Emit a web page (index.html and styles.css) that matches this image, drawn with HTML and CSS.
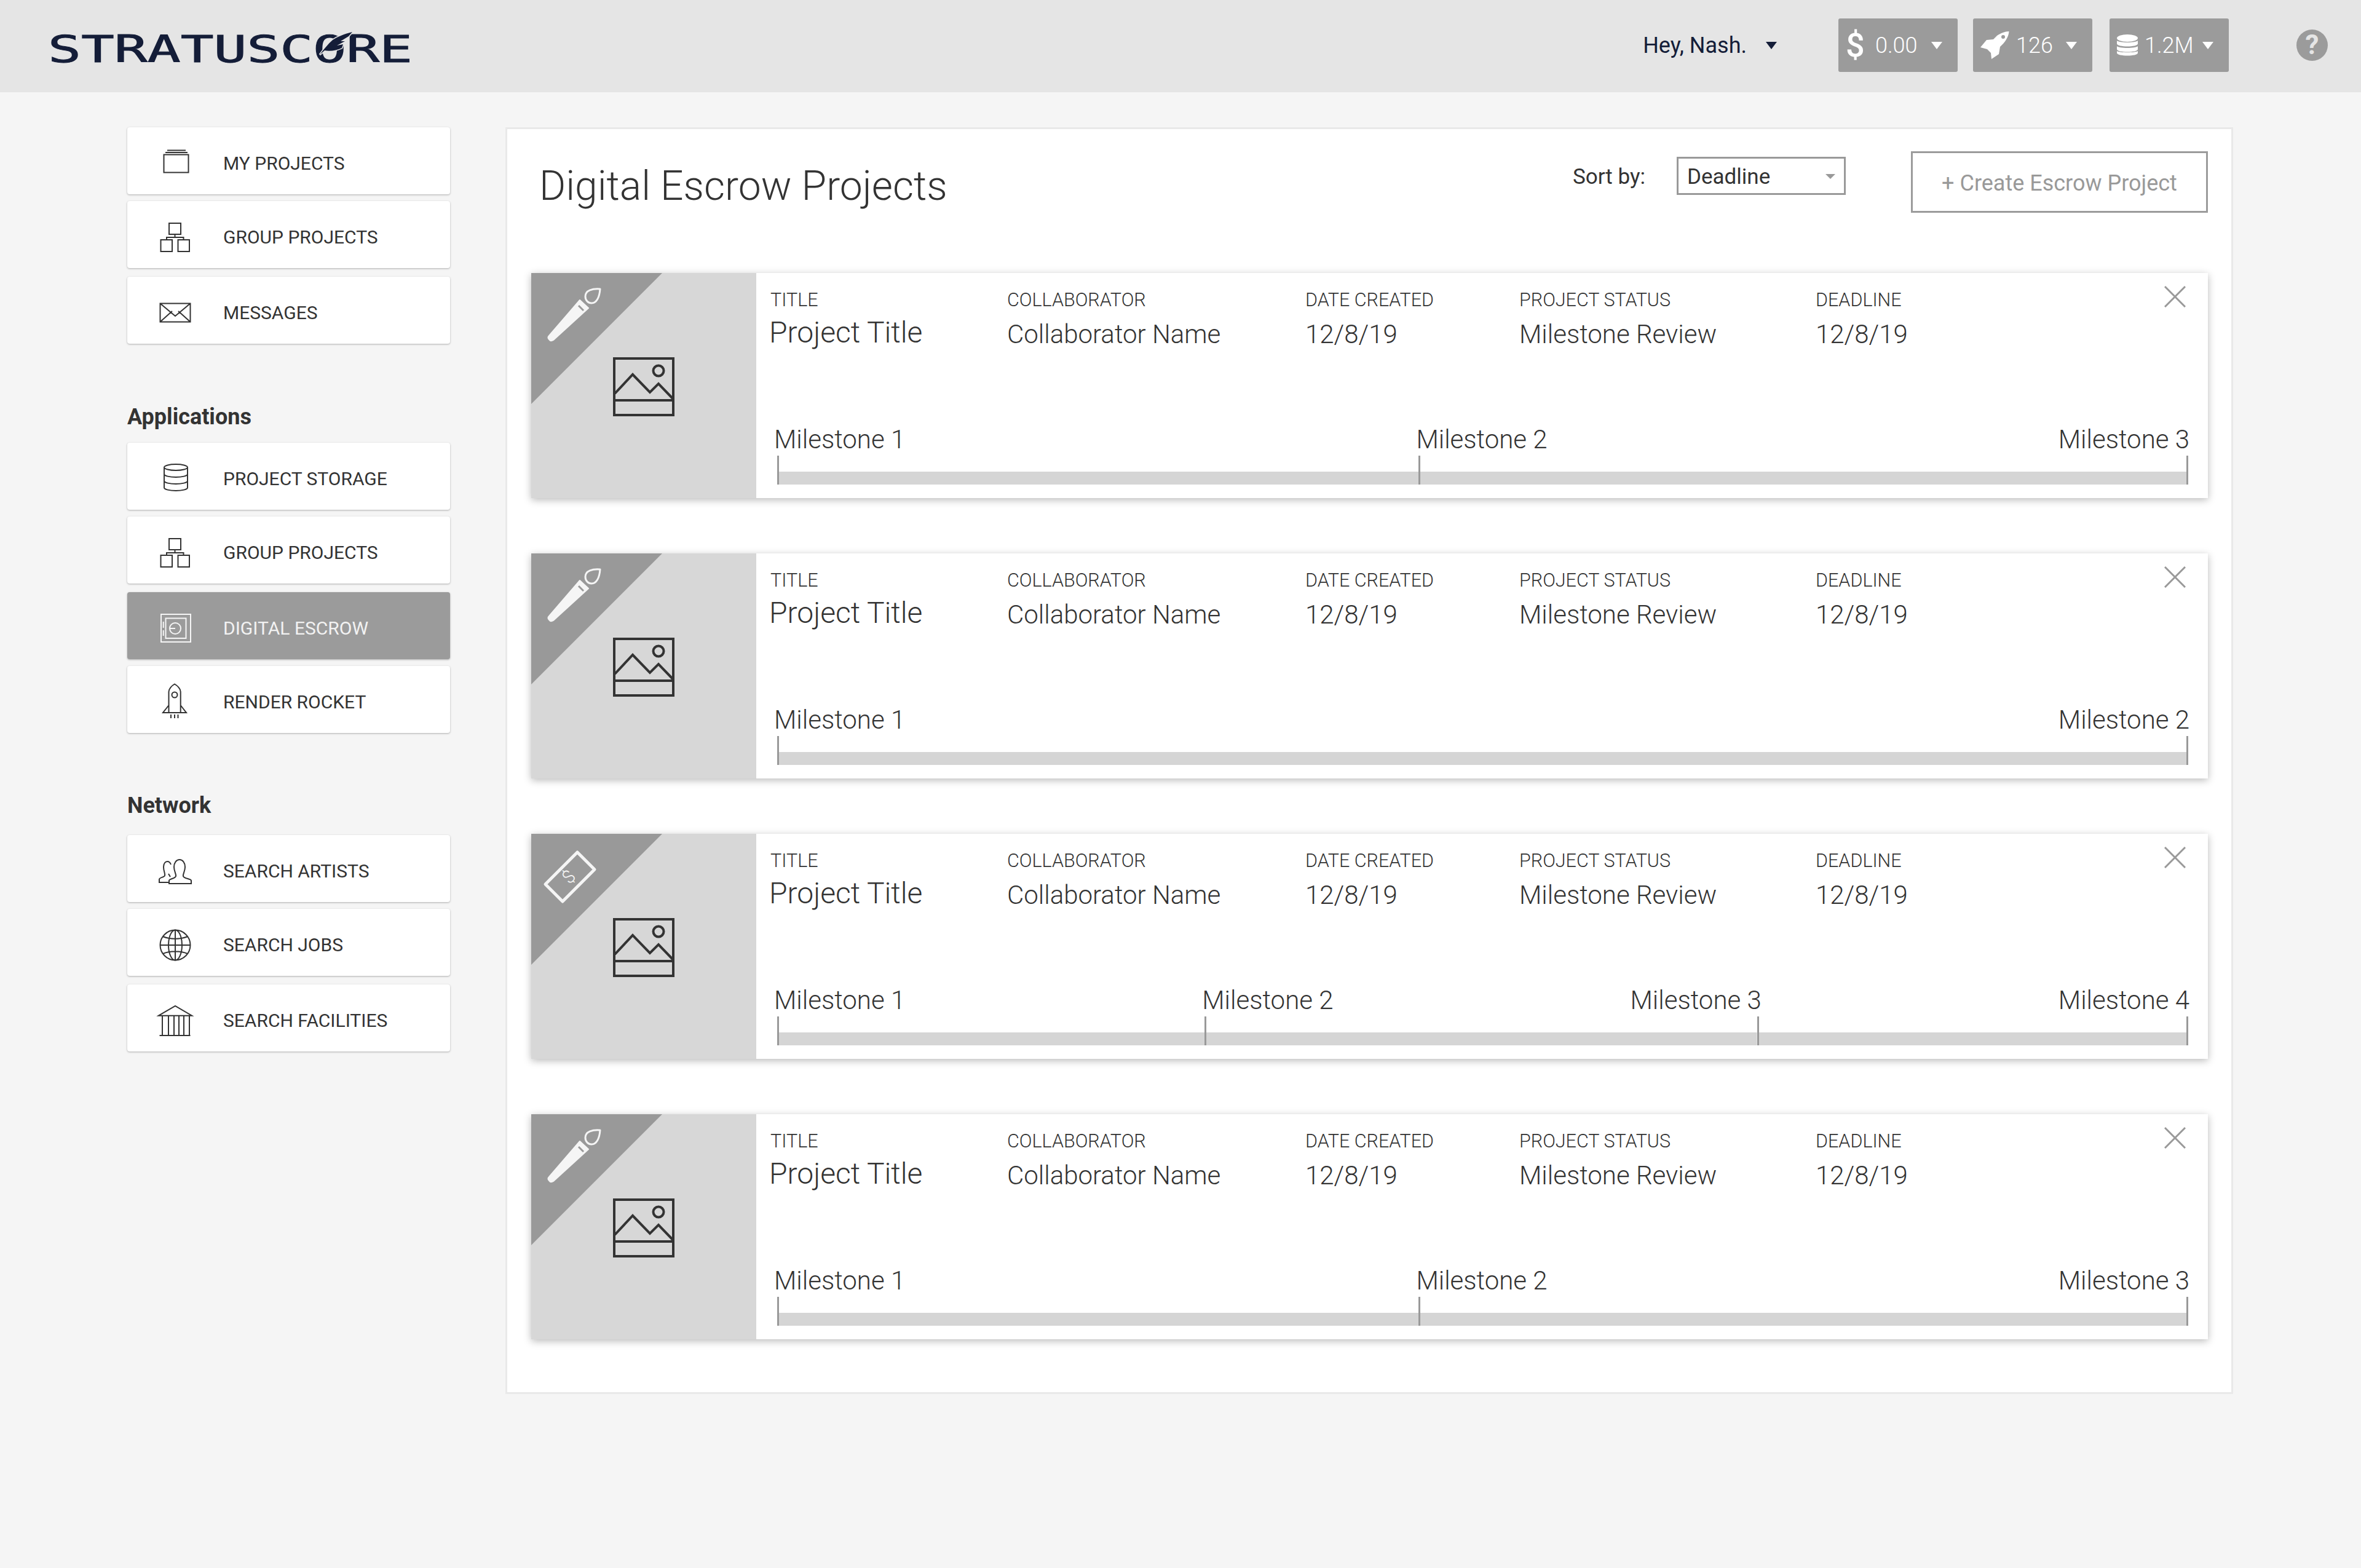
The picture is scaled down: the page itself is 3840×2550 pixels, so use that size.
FILE: index.html
```html
<!DOCTYPE html>
<html lang="en">
<head>
    <meta charset="UTF-8">
    <meta name="viewport" content="width=device-width, initial-scale=1.0">
    <title>Digital Escrow Projects</title>
    <link rel="stylesheet" href="styles.css">
</head>
<body>

<svg class="sprites" xmlns="http://www.w3.org/2000/svg">
    <symbol id="i-projects" viewBox="0 0 70 60"><path d="M16.5 19.5h40v29h-40zM19 16h36M22 12.5h30"/></symbol>
    <symbol id="i-group" viewBox="0 0 70 60"><path d="M25 11h19v18H25zM11.5 38H30v19H11.5zM39.5 38H58v19H39.5zM34.5 29v5M21 38v-4h27.5v4"/></symbol>
    <symbol id="i-mail" viewBox="0 0 70 60"><path d="M10.5 18.5h49v30h-49zM10.5 18.5L35 39l24.5-20.500M11 48l19-17M59 48L40 31"/></symbol>
    <symbol id="i-storage" viewBox="0 0 70 60"><ellipse cx="36" cy="15" rx="19" ry="5"/><path d="M17 15v33c0 3 9 5 19 5s19-2 19-5V15M17 26c0 3 9 5 19 5s19-2 19-5M17 37c0 3 9 5 19 5s19-2 19-5"/></symbol>
    <symbol id="i-safe" viewBox="0 0 70 60"><path d="M12 11h48v45H12zM19.500 17.500h33v32.500h-33zM15.700 23v10M15.700 37v9M26 34h9"/><circle cx="35" cy="34" r="9"/></symbol>
    <symbol id="i-rocket" viewBox="0 0 70 60"><path d="M24.500 51V17c0-5 5-10 9.500-12.500C38.500 7 43.700 12 43.700 17v34M24.500 39L15 51h38L43.700 39M28 54v6M34 54v8M39.500 54v6"/><circle cx="34" cy="22" r="4.500"/></symbol>
    <symbol id="i-artists" viewBox="0 0 70 60"><path d="M25 54v-5c0-3 10-3 11-7 1-3-3-8-3-15 0-7 4-12 9-12s9 5 9 12c0 7-4 12-3 15 1 4 13 4 13 7v5zM25 52H9v-5c0-3 8-3 9-6 1-3-2-7-2-14 0-6 3-9 6-9s5 2 6 5M24 38l3 5"/></symbol>
    <symbol id="i-globe" viewBox="0 0 70 60"><circle cx="35" cy="34" r="24.500"/><ellipse cx="35" cy="34" rx="11" ry="24.500"/><path d="M35 9.500v49M10.500 34h49M15 20c11 5 29 5 40 0M15 48c11-5 29-5 40 0"/></symbol>
    <symbol id="i-bank" viewBox="0 0 70 60"><path d="M8 25.700L35 10l27 15.700zM14 26v31M24 26v31M33 26v31M41 26v31M49 26v31M58 26v31M9.500 58h50"/></symbol>
    <symbol id="i-picture" viewBox="0 0 100 96"><path class="pic" d="M2 2h96v92H2zM2 70h96M3 59l29-31 28 29 14-14 24 25"/><circle class="pic" cx="74" cy="22" r="8.500"/></symbol>
    <symbol id="i-brush" viewBox="0 0 213 213"><path class="brush-body" d="M79 44l14 13-57 52c-3 2-5 2-7-1-2-2-2-4 0-6z"/><path class="brush-mark" d="M77 53l8 8"/><path class="brush-head" d="M112 26c-12-1-24 2-24 12 0 7 5 11 10 11 8 0 13-9 14-23z"/></symbol>
    <symbol id="i-bill" viewBox="0 0 213 213"><path class="bill" d="M75 30l28 28-52 52-28-28z"/><text class="bill-sign" x="0" y="0" transform="translate(61 70) rotate(-45)" text-anchor="middle" dy="10">$</text></symbol>
    <symbol id="i-close" viewBox="0 0 35 35"><path class="close-x" d="M1 1l33 33M34 1L1 34"/></symbol>
</svg>

<header class="topbar">
    <svg class="logo" viewBox="0 0 593 52" width="593" height="52" xmlns="http://www.w3.org/2000/svg">
        <text x="0" y="50" textLength="593" lengthAdjust="spacingAndGlyphs">STRATUSCORE</text>
        <path class="feather" d="M495 1c-12 3-25 8-32 13-8 7-15 16-21 24l8-7c8 2 20 0 28-4l2-6-10 2 13-7h-7l13-8z"/>
    </svg>
    <div class="topbar-right">
        <div class="greeting">Hey, Nash.<span class="caret caret-dark"></span></div>
        <div class="stat stat-money"><span class="stat-dollar">$</span><span>0.00</span><span class="caret"></span></div>
        <div class="stat stat-rocket">
            <svg class="stat-icon" viewBox="0 0 47 46" width="47" height="46" xmlns="http://www.w3.org/2000/svg"><path d="M46.500 0C40 0 33 3 27 7l-6 6-11 1L0 26l11 3 6 6 1 10 12-8 2-12C40 18 46 9 46.500 0z"/><circle class="stat-hole" cx="37" cy="9" r="3"/></svg>
            <span>126</span><span class="caret"></span>
        </div>
        <div class="stat">
            <svg class="stat-icon" viewBox="0 0 34 35" width="34" height="35" xmlns="http://www.w3.org/2000/svg"><ellipse cx="17" cy="6" rx="17" ry="6"/><path d="M0 10c3 4 31 4 34 0v5c0 6-34 6-34 0zM0 19c3 4 31 4 34 0v5c0 6-34 6-34 0zM0 27c3 3 31 3 34 0v3c0 6-34 6-34 0z"/></svg>
            <span>1.2M</span><span class="caret"></span>
        </div>
        <div class="help">?</div>
    </div>
</header>

<div class="page">
    <aside class="sidebar">
        <div class="nav-group">
            <a class="nav-item"><svg class="nav-icon"><use href="#i-projects"/></svg><span>MY PROJECTS</span></a>
            <a class="nav-item"><svg class="nav-icon"><use href="#i-group"/></svg><span>GROUP PROJECTS</span></a>
            <a class="nav-item wide"><svg class="nav-icon"><use href="#i-mail"/></svg><span>MESSAGES</span></a>
        </div>

        <h3 class="nav-heading">Applications</h3>
        <div class="nav-group">
            <a class="nav-item"><svg class="nav-icon"><use href="#i-storage"/></svg><span>PROJECT STORAGE</span></a>
            <a class="nav-item"><svg class="nav-icon"><use href="#i-group"/></svg><span>GROUP PROJECTS</span></a>
            <a class="nav-item wide active"><svg class="nav-icon"><use href="#i-safe"/></svg><span>DIGITAL ESCROW</span></a>
            <a class="nav-item"><svg class="nav-icon"><use href="#i-rocket"/></svg><span>RENDER ROCKET</span></a>
        </div>

        <h3 class="nav-heading network">Network</h3>
        <div class="nav-group">
            <a class="nav-item"><svg class="nav-icon"><use href="#i-artists"/></svg><span>SEARCH ARTISTS</span></a>
            <a class="nav-item"><svg class="nav-icon"><use href="#i-globe"/></svg><span>SEARCH JOBS</span></a>
            <a class="nav-item wide"><svg class="nav-icon"><use href="#i-bank"/></svg><span>SEARCH FACILITIES</span></a>
        </div>
    </aside>

    <main class="panel">
        <div class="panel-head">
            <h1>Digital Escrow Projects</h1>
            <span class="sort-label">Sort by:</span>
            <div class="sort-select">Deadline<span class="caret caret-grey"></span></div>
            <button class="create-btn">+ Create Escrow Project</button>
        </div>

        <div class="project-list">

            <article class="project">
                <div class="thumb">
                    <div class="corner"><svg class="corner-icon"><use href="#i-brush"/></svg></div>
                    <svg class="pic-icon"><use href="#i-picture"/></svg>
                </div>
                <div class="project-body">
                    <div class="info">
                        <div class="col col-title"><label>TITLE</label><p class="project-title">Project Title</p></div>
                        <div class="col col-collab"><label>COLLABORATOR</label><p>Collaborator Name</p></div>
                        <div class="col col-date"><label>DATE CREATED</label><p>12/8/19</p></div>
                        <div class="col col-status"><label>PROJECT STATUS</label><p>Milestone Review</p></div>
                        <div class="col"><label>DEADLINE</label><p>12/8/19</p></div>
                        <svg class="close"><use href="#i-close"/></svg>
                    </div>
                    <div class="milestones">
                        <div class="ms-labels"><span>Milestone 1</span><span>Milestone 2</span><span>Milestone 3</span></div>
                        <div class="ms-track">
                            <div class="ms-seg" style="flex: 1044"></div>
                            <div class="ms-seg" style="flex: 1251"></div>
                        </div>
                    </div>
                </div>
            </article>

            <article class="project">
                <div class="thumb">
                    <div class="corner"><svg class="corner-icon"><use href="#i-brush"/></svg></div>
                    <svg class="pic-icon"><use href="#i-picture"/></svg>
                </div>
                <div class="project-body">
                    <div class="info">
                        <div class="col col-title"><label>TITLE</label><p class="project-title">Project Title</p></div>
                        <div class="col col-collab"><label>COLLABORATOR</label><p>Collaborator Name</p></div>
                        <div class="col col-date"><label>DATE CREATED</label><p>12/8/19</p></div>
                        <div class="col col-status"><label>PROJECT STATUS</label><p>Milestone Review</p></div>
                        <div class="col"><label>DEADLINE</label><p>12/8/19</p></div>
                        <svg class="close"><use href="#i-close"/></svg>
                    </div>
                    <div class="milestones">
                        <div class="ms-labels"><span>Milestone 1</span><span>Milestone 2</span></div>
                        <div class="ms-track">
                            <div class="ms-seg" style="flex: 1"></div>
                        </div>
                    </div>
                </div>
            </article>

            <article class="project">
                <div class="thumb">
                    <div class="corner"><svg class="corner-icon"><use href="#i-bill"/></svg></div>
                    <svg class="pic-icon"><use href="#i-picture"/></svg>
                </div>
                <div class="project-body">
                    <div class="info">
                        <div class="col col-title"><label>TITLE</label><p class="project-title">Project Title</p></div>
                        <div class="col col-collab"><label>COLLABORATOR</label><p>Collaborator Name</p></div>
                        <div class="col col-date"><label>DATE CREATED</label><p>12/8/19</p></div>
                        <div class="col col-status"><label>PROJECT STATUS</label><p>Milestone Review</p></div>
                        <div class="col"><label>DEADLINE</label><p>12/8/19</p></div>
                        <svg class="close"><use href="#i-close"/></svg>
                    </div>
                    <div class="milestones">
                        <div class="ms-labels"><span>Milestone 1</span><span>Milestone 2</span><span>Milestone 3</span><span>Milestone 4</span></div>
                        <div class="ms-track">
                            <div class="ms-seg" style="flex: 696"></div>
                            <div class="ms-seg" style="flex: 900"></div>
                            <div class="ms-seg" style="flex: 699"></div>
                        </div>
                    </div>
                </div>
            </article>

            <article class="project">
                <div class="thumb">
                    <div class="corner"><svg class="corner-icon"><use href="#i-brush"/></svg></div>
                    <svg class="pic-icon"><use href="#i-picture"/></svg>
                </div>
                <div class="project-body">
                    <div class="info">
                        <div class="col col-title"><label>TITLE</label><p class="project-title">Project Title</p></div>
                        <div class="col col-collab"><label>COLLABORATOR</label><p>Collaborator Name</p></div>
                        <div class="col col-date"><label>DATE CREATED</label><p>12/8/19</p></div>
                        <div class="col col-status"><label>PROJECT STATUS</label><p>Milestone Review</p></div>
                        <div class="col"><label>DEADLINE</label><p>12/8/19</p></div>
                        <svg class="close"><use href="#i-close"/></svg>
                    </div>
                    <div class="milestones">
                        <div class="ms-labels"><span>Milestone 1</span><span>Milestone 2</span><span>Milestone 3</span></div>
                        <div class="ms-track">
                            <div class="ms-seg" style="flex: 1044"></div>
                            <div class="ms-seg" style="flex: 1251"></div>
                        </div>
                    </div>
                </div>
            </article>

        </div>
    </main>
</div>

</body>
</html>
```

FILE: styles.css
```css
* {
    box-sizing: border-box;
}

body {
    margin: 0;
    min-height: 2550px;
    background-color: #f5f5f5;
    font-family: Roboto, "Liberation Sans", sans-serif;
    color: #333;
}

.sprites {
    display: none;
}

/* top bar */
.topbar {
    display: flex;
    align-items: center;
    height: 150px;
    padding-left: 78px;
    background-color: #e5e5e5;
}

.logo {
    margin-top: 4px;
    overflow: visible;
}

.logo text {
    font-family: "DejaVu Sans Mono", monospace;
    font-size: 60px;
    fill: #141d38;
    stroke: #141d38;
    stroke-width: 1px;
}

.feather {
    fill: #141d38;
    stroke: #e5e5e5;
    stroke-width: 3px;
    paint-order: stroke;
}

.topbar-right {
    display: flex;
    align-items: center;
    height: 100%;
    margin-left: auto;
    padding-bottom: 3px;
}

.greeting {
    display: flex;
    align-items: center;
    margin-right: 100px;
    font-size: 36px;
    color: #141d38;
}

.caret {
    display: inline-block;
    width: 0;
    height: 0;
    border-left: 9px solid transparent;
    border-right: 9px solid transparent;
    border-top: 12px solid #fff;
}

.caret-dark {
    margin-left: 31px;
    border-top-color: #141d38;
}

.stat {
    display: flex;
    align-items: center;
    width: 194px;
    height: 87px;
    margin-right: 25px;
    padding-left: 12px;
    border-radius: 3px;
    background-color: #9b9b9b;
    color: #fff;
    font-size: 36px;
    font-weight: 300;
}

.stat-rocket {
    margin-right: 28px;
}

.stat .caret {
    margin-left: auto;
    margin-right: 25px;
}

.stat-dollar {
    width: 48px;
    font-size: 54px;
    font-weight: 500;
    line-height: 1;
}

.stat-icon {
    margin-right: 11px;
    fill: #fff;
}

.stat-hole {
    fill: #9b9b9b;
}

.help {
    width: 51px;
    height: 51px;
    margin-left: 85px;
    margin-right: 54px;
    border-radius: 50%;
    background-color: #9b9b9b;
    color: #e5e5e5;
    font-size: 44px;
    font-weight: 700;
    line-height: 51px;
    text-align: center;
}

/* page */
.page {
    display: flex;
    align-items: flex-start;
    padding: 57px 0 0 207px;
}

.sidebar {
    width: 525px;
    margin-right: 90px;
}

.nav-item {
    display: flex;
    align-items: center;
    height: 109px;
    margin-bottom: 11px;
    padding-left: 43px;
    border-radius: 4px;
    background-color: #fff;
    box-shadow: 0 1px 3px rgba(0, 0, 0, 0.3);
    font-size: 30px;
    color: #333;
}

.nav-item span {
    margin-left: 43px;
    padding-top: 7px;
}

.nav-item.wide {
    margin-top: 14px;
}

.nav-icon {
    flex: none;
    width: 70px;
    height: 60px;
    fill: none;
    stroke: #333;
    stroke-width: 2px;
}

.nav-item.active {
    background-color: #9b9b9b;
    color: #f2f2f2;
}

.nav-item.active .nav-icon {
    stroke: #f5f5f5;
}

.nav-heading {
    margin: 96px 0 19px;
    font-size: 36px;
    font-weight: 700;
    line-height: 46px;
    color: #333;
}

.nav-heading.network {
    margin-top: 95px;
    margin-bottom: 25px;
}

/* main panel */
.panel {
    width: 2810px;
    height: 2060px;
    padding: 0 38px 0 39px;
    border: 3px solid #e9e9e9;
    background-color: #fff;
}

.panel-head {
    display: flex;
    align-items: flex-start;
    height: 234px;
}

.panel-head h1 {
    margin: 48px auto 0 13px;
    font-size: 66px;
    font-weight: 300;
    line-height: 90px;
}

.sort-label {
    margin-top: 53px;
    margin-right: 51px;
    font-size: 35px;
    line-height: 50px;
}

.sort-select {
    display: flex;
    align-items: center;
    width: 275px;
    height: 62px;
    margin-top: 45px;
    margin-right: 106px;
    padding: 2px 0 0 14px;
    border: 3px solid #999;
    font-size: 35px;
}

.caret-grey {
    margin-left: auto;
    margin-right: 14px;
    border-left-width: 8px;
    border-right-width: 8px;
    border-top: 8px solid #999;
}

.create-btn {
    width: 483px;
    height: 100px;
    margin-top: 36px;
    padding-top: 4px;
    border: 3px solid #9b9b9b;
    background-color: #fff;
    font-family: Roboto, sans-serif;
    font-size: 36px;
    color: #999;
}

.project-list {
    display: flex;
    flex-direction: column;
    gap: 90px;
}

.project {
    display: flex;
    height: 366px;
    background-color: #fff;
    box-shadow: 0 3px 12px rgba(0, 0, 0, 0.28);
}

.thumb {
    position: relative;
    display: flex;
    align-items: center;
    justify-content: center;
    flex: none;
    width: 366px;
    background-color: #d7d7d7;
}

.corner {
    position: absolute;
    top: 0;
    left: 0;
    width: 213px;
    height: 213px;
    background-color: #999;
    clip-path: polygon(0 0, 100% 0, 0 100%);
}

.corner-icon {
    width: 213px;
    height: 213px;
}

.brush-body {
    fill: #f5f5f5;
    stroke: #f5f5f5;
    stroke-width: 2px;
    stroke-linejoin: round;
}

.brush-mark {
    stroke: #999;
    stroke-width: 3px;
}

.brush-head {
    fill: none;
    stroke: #f5f5f5;
    stroke-width: 3px;
    stroke-linejoin: round;
}

.bill {
    fill: none;
    stroke: #f5f5f5;
    stroke-width: 5px;
    stroke-linejoin: round;
}

.bill-sign {
    font-size: 30px;
    font-weight: 300;
    fill: #f5f5f5;
}

.pic-icon {
    width: 100px;
    height: 96px;
    margin-top: 3px;
}

.pic {
    fill: none;
    stroke: #333;
    stroke-width: 4px;
}

.project-body {
    display: flex;
    flex-direction: column;
    flex: 1;
    padding: 26px 30px 22px 23px;
}

.info {
    display: flex;
}

.col label {
    display: block;
    font-size: 30.5px;
    font-weight: 300;
    line-height: 36px;
}

.col p {
    margin: 12px 0 0;
    font-size: 42px;
    font-weight: 300;
    line-height: 52px;
}

.col p.project-title {
    margin-top: 9px;
    margin-left: -2px;
    font-size: 48px;
}

.col-title {
    width: 385px;
}

.col-collab {
    width: 485px;
}

.col-date {
    width: 348px;
}

.col-status {
    width: 482px;
}

.close {
    width: 35px;
    height: 35px;
    margin-top: -5px;
    margin-left: auto;
    margin-right: 6px;
}

.close-x {
    fill: none;
    stroke: #999;
    stroke-width: 3px;
}

.milestones {
    margin-top: auto;
    margin-left: 6px;
}

.ms-labels {
    display: flex;
    justify-content: space-between;
    font-size: 42px;
    font-weight: 300;
    line-height: 52px;
}

.ms-track {
    display: flex;
    height: 47px;
    margin: 0 2px 0 5px;
    border-right: 3px solid #999;
}

.ms-seg {
    border-left: 3px solid #999;
    background: linear-gradient(#d5d5d5, #d5d5d5) bottom / 100% 21px no-repeat;
}
```
